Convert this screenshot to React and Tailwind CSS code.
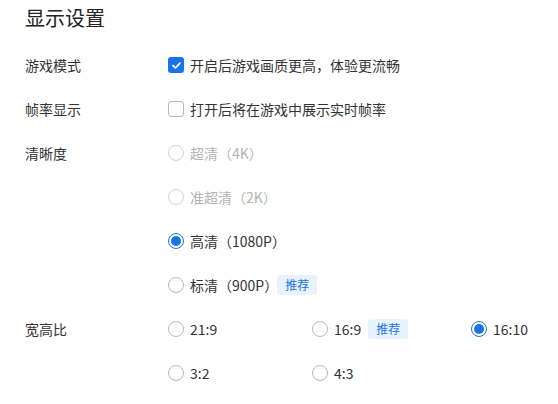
import { useState } from 'react';

const Radio = ({ checked, disabled, label, tag, tight, onClick }) => (
  <button
    type="button"
    disabled={disabled}
    onClick={onClick}
    className="flex items-center h-[44px] text-left"
  >
    <span
      className={`w-[16px] h-[16px] rounded-full border flex items-center justify-center shrink-0 bg-white ${
        checked ? 'border-[#1a73e8]' : disabled ? 'border-[#d4d4d4]' : 'border-[#b8b8b8]'
      }`}
    >
      {checked && <span className="w-[10px] h-[10px] rounded-full bg-[#1a73e8]"></span>}
    </span>
    <span className={`ml-[6px] text-[14px] whitespace-nowrap ${disabled ? 'text-[#b3b3b3]' : 'text-[#333]'}`}>{label}</span>
    {tag && (
      <span
        className={`${tight ? 'ml-[-1px]' : 'ml-[7px]'} h-[20px] px-[8px] flex items-center rounded-[3px] bg-[#e9f3fd] text-[#1a73e8] text-[12px]`}
      >
        {tag}
      </span>
    )}
  </button>
);

const Checkbox = ({ checked, label, onClick }) => (
  <button type="button" onClick={onClick} className="flex items-center h-[44px]">
    <span
      className={`w-[16px] h-[16px] rounded-[3px] flex items-center justify-center shrink-0 ${
        checked ? 'bg-[#1a73e8]' : 'border border-[#b8b8b8] bg-white'
      }`}
    >
      {checked && (
        <svg width="11" height="11" viewBox="0 0 12 12" fill="none">
          <path d="M2.2 6.2 L4.8 8.7 L9.8 3.4" stroke="white" strokeWidth="1.9" strokeLinecap="round" strokeLinejoin="round" />
        </svg>
      )}
    </span>
    <span className="ml-[6px] text-[14px] text-[#333] whitespace-nowrap">{label}</span>
  </button>
);

const Row = ({ label, children }) => (
  <div className="flex">
    <div className="w-[143px] shrink-0 h-[44px] flex items-center text-[14px] text-[#333]">{label}</div>
    <div className="flex-1">{children}</div>
  </div>
);

const App = () => {
  const [gameMode, setGameMode] = useState(true);
  const [fps, setFps] = useState(false);
  const [quality, setQuality] = useState('1080');
  const [ratio, setRatio] = useState('16:10');

  const ratios = [
    { v: '21:9' },
    { v: '16:9', tag: '推荐' },
    { v: '16:10' },
    { v: '3:2' },
    { v: '4:3' },
  ];

  return (
    <div
      className="w-[558px] h-[404px] bg-white px-[25px] overflow-hidden"
      style={{ fontFamily: '"Noto Sans CJK SC", "Noto Sans", sans-serif' }}
    >
      <h1 className="h-[36px] leading-[36px] text-[20px] text-[#222] mb-[7px]">显示设置</h1>

      <Row label="游戏模式">
        <Checkbox checked={gameMode} onClick={() => setGameMode(!gameMode)} label="开启后游戏画质更高，体验更流畅" />
      </Row>

      <Row label="帧率显示">
        <Checkbox checked={fps} onClick={() => setFps(!fps)} label="打开后将在游戏中展示实时帧率" />
      </Row>

      <Row label="清晰度">
        <div className="flex flex-col items-start">
          <Radio disabled label="超清（4K）" />
          <Radio disabled label="准超清（2K）" />
          <Radio checked={quality === '1080'} onClick={() => setQuality('1080')} label="高清（1080P）" />
          <Radio checked={quality === '900'} onClick={() => setQuality('900')} label="标清（900P）" tag="推荐" tight />
        </div>
      </Row>

      <Row label="宽高比">
        <div className="grid grid-cols-[144px_159px_62px]">
          {ratios.map((r) => (
            <Radio key={r.v} checked={ratio === r.v} onClick={() => setRatio(r.v)} label={r.v} tag={r.tag} />
          ))}
        </div>
      </Row>
    </div>
  );
};

export default App;
